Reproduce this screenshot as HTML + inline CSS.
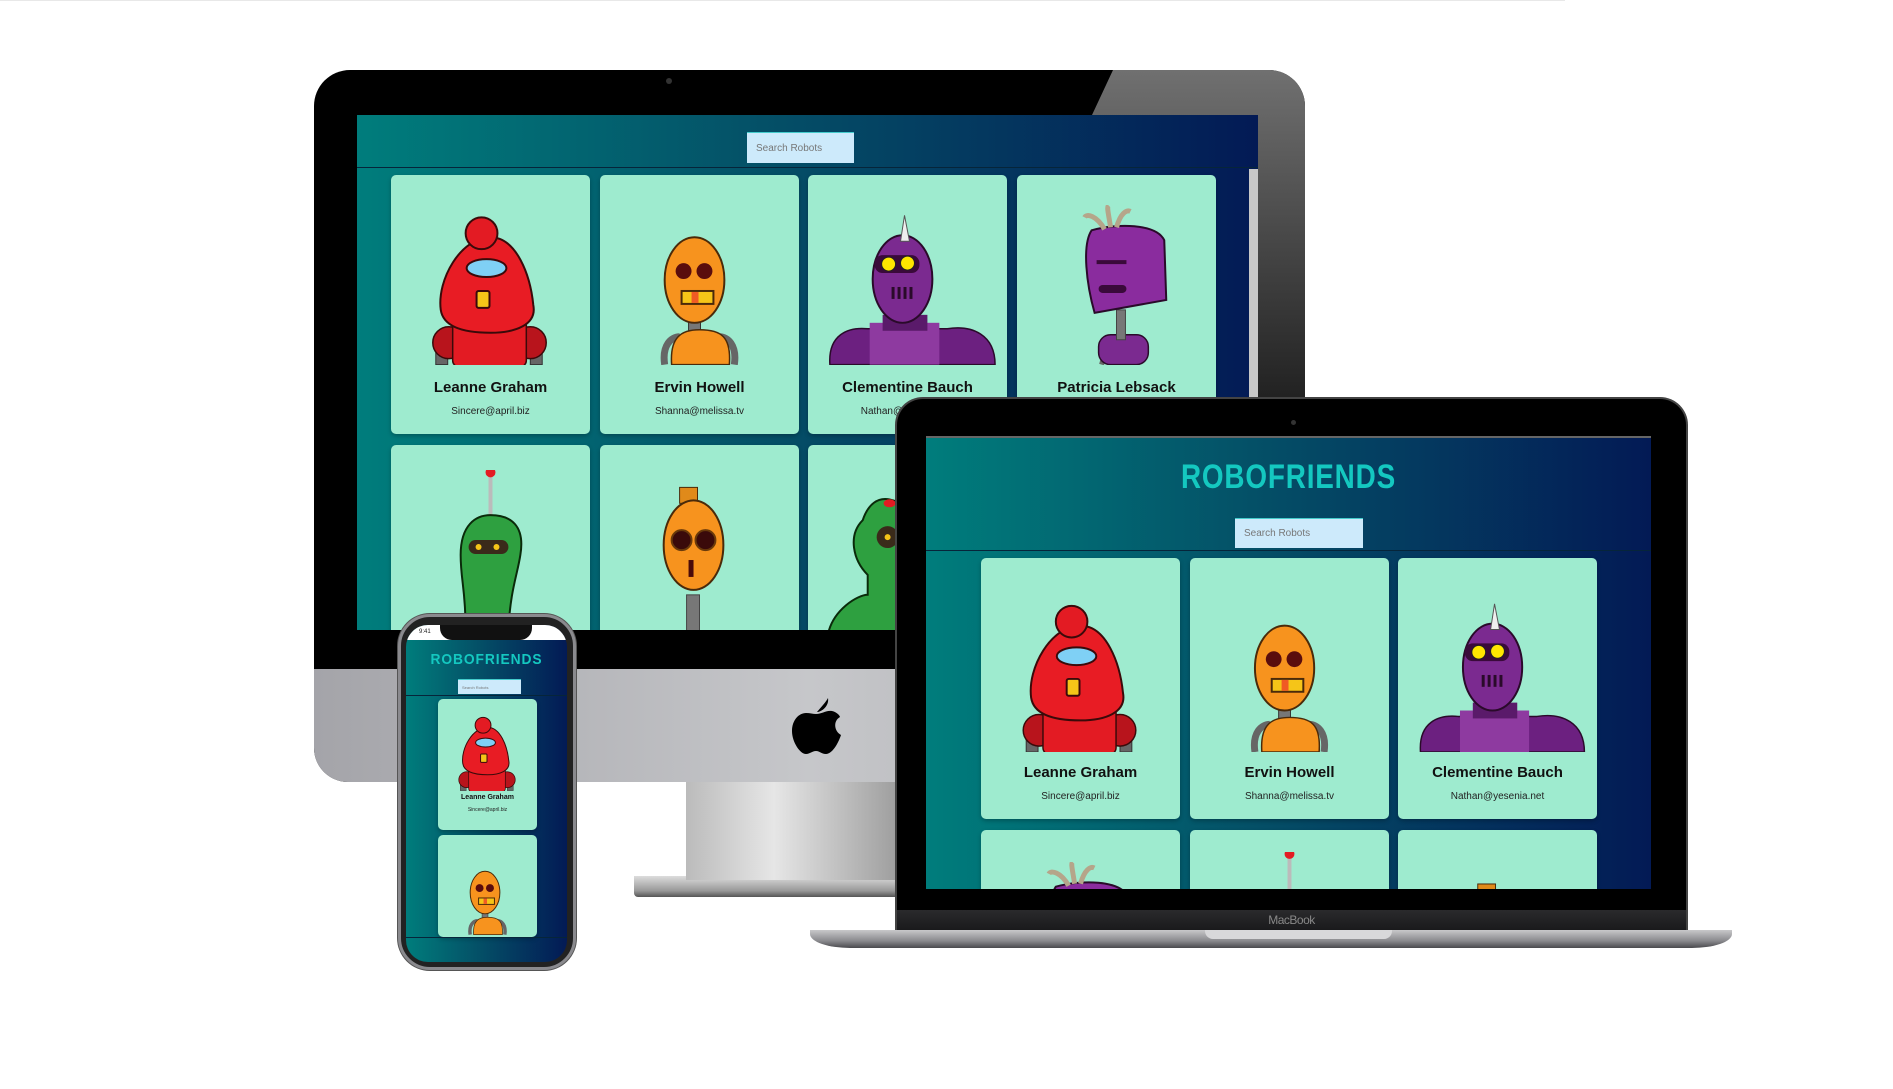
<!DOCTYPE html>
<html><head><meta charset="utf-8"><style>
*{margin:0;padding:0;box-sizing:border-box}
body{width:1893px;height:1089px;background:#fff;position:relative;overflow:hidden;font-family:"Liberation Sans",sans-serif}
.a{position:absolute}
.grad{background:linear-gradient(90deg,#007d7c 0%,#045067 45%,#031a55 100%)}
.card{position:absolute;background:#9eebcf;border-radius:5px;overflow:hidden;box-shadow:0 2px 4px rgba(0,0,0,.25)}
.card svg{position:absolute;left:0}
.nm{position:absolute;left:0;right:0;text-align:center;font-weight:bold;color:#111;font-size:15px}
.em{position:absolute;left:0;right:0;text-align:center;color:#222;font-size:10px}
.title{color:#14c8c0;font-weight:bold;text-align:center;letter-spacing:1px;transform-origin:center}
.search{background:#cdeafb;color:#777;font-size:10px;padding-left:9px;display:flex;align-items:center;border-top:1px solid #4cc}
</style></head><body>
<svg width="0" height="0" style="position:absolute">
<defs>
<symbol id="red" viewBox="0 0 200 160">
<rect x="45" y="135" width="12" height="25" fill="#666" stroke="#333"/><rect x="140" y="135" width="12" height="25" fill="#666" stroke="#333"/>
<circle cx="58" cy="138" r="16" fill="#b8141c" stroke="#3a0a0a" stroke-width="1.5"/><circle cx="140" cy="138" r="16" fill="#b8141c" stroke="#3a0a0a" stroke-width="1.5"/>
<rect x="62" y="112" width="74" height="50" rx="6" fill="#e31b23" stroke="#3a0a0a" stroke-width="1.5"/>
<path d="M100 32 C70 32 46 75 50 105 C53 125 80 128 100 128 C125 128 147 120 143 100 C140 70 126 32 100 32Z" fill="#e81c24" stroke="#3a0a0a" stroke-width="2"/>
<circle cx="91" cy="28" r="16" fill="#e31b23" stroke="#3a0a0a" stroke-width="2"/>
<ellipse cx="96" cy="63" rx="20" ry="9" fill="#7fd0f5" stroke="#3a0a0a" stroke-width="2"/>
<rect x="86" y="86" width="13" height="17" rx="2" fill="#f5c518" stroke="#3a0a0a" stroke-width="2"/>
</symbol>
<symbol id="org" viewBox="0 0 200 160">
<path d="M65 160 C62 140 72 132 80 132" fill="none" stroke="#666" stroke-width="7"/><path d="M135 160 C138 140 128 132 120 132" fill="none" stroke="#666" stroke-width="7"/>
<rect x="89" y="112" width="12" height="20" fill="#777" stroke="#333"/>
<path d="M72 160 C70 132 82 125 100 125 C122 125 132 132 130 160Z" fill="#f7931e" stroke="#4a2a0a" stroke-width="1.5"/>
<ellipse cx="95" cy="75" rx="30" ry="43" fill="#f7931e" stroke="#4a2a0a" stroke-width="2"/>
<circle cx="84" cy="66" r="8" fill="#5a0d0d"/><circle cx="105" cy="66" r="8" fill="#5a0d0d"/>
<rect x="82" y="86" width="32" height="13" fill="#f5c518" stroke="#4a2a0a" stroke-width="2"/>
<rect x="92" y="87" width="7" height="11" fill="#f05a24"/>
</symbol>
<symbol id="pur" viewBox="0 0 200 160">
<path d="M22 160 C20 130 40 122 60 124 L140 124 C165 120 188 130 188 160Z" fill="#6c2080" stroke="#2a0a2a" stroke-width="1.5"/>
<rect x="62" y="118" width="70" height="42" fill="#8e3aa0"/>
<rect x="75" y="110" width="45" height="16" fill="#5a1a6a"/>
<ellipse cx="95" cy="74" rx="30" ry="44" fill="#7b2a90" stroke="#2a0a2a" stroke-width="2"/>
<polygon points="93,36 97,10 102,36" fill="#eee" stroke="#555"/>
<rect x="67" y="50" width="45" height="18" rx="8" fill="#3a0a3a"/>
<circle cx="81" cy="59" r="7" fill="#ffe600" stroke="#222"/><circle cx="100" cy="58" r="7" fill="#ffe600" stroke="#222"/>
<rect x="84" y="82" width="3" height="12" fill="#2a0a2a"/><rect x="90" y="82" width="3" height="12" fill="#2a0a2a"/><rect x="96" y="82" width="3" height="12" fill="#2a0a2a"/><rect x="102" y="82" width="3" height="12" fill="#2a0a2a"/>
</symbol>
<symbol id="pat" viewBox="0 0 200 160">
<path d="M85 160 L92 135 L108 135 L118 160" fill="none" stroke="#666" stroke-width="5"/>
<rect x="82" y="130" width="50" height="30" rx="12" fill="#7b2a90" stroke="#2a0a2a" stroke-width="1.5"/>
<rect x="100" y="105" width="9" height="30" fill="#777" stroke="#444"/>
<path d="M75 25 C100 18 140 18 148 35 L150 95 L78 108 C70 80 65 40 75 25Z" fill="#8a2c9e" stroke="#2a0a2a" stroke-width="2"/>
<path d="M88 24 C80 10 70 8 68 12 M94 22 C92 8 90 2 92 0 M100 22 C104 8 110 4 114 6" stroke="#b5a58a" stroke-width="5" fill="none"/>
<rect x="80" y="55" width="30" height="4" fill="#3a0a3a"/><rect x="82" y="80" width="28" height="8" rx="4" fill="#3a0a3a"/>
</symbol>
<symbol id="grn" viewBox="0 0 200 160">
<line x1="100" y1="0" x2="100" y2="45" stroke="#bbb" stroke-width="4"/><circle cx="100" cy="2" r="5" fill="#e31b23"/>
<path d="M75 160 C75 120 70 110 70 85 C70 55 85 45 100 45 C120 45 135 55 130 85 C127 105 120 120 118 160Z" fill="#2ea040" stroke="#0a2a0a" stroke-width="2"/>
<rect x="78" y="70" width="40" height="14" rx="7" fill="#3a2a1a"/><circle cx="88" cy="77" r="3" fill="#f5c518"/><circle cx="106" cy="77" r="3" fill="#f5c518"/>
</symbol>
<symbol id="org2" viewBox="0 0 200 160">
<rect x="87" y="110" width="13" height="50" fill="#777" stroke="#444"/>
<rect x="80" y="2" width="18" height="16" fill="#e08a1a" stroke="#4a2a0a"/>
<ellipse cx="94" cy="60" rx="30" ry="45" fill="#f7931e" stroke="#4a2a0a" stroke-width="2"/>
<circle cx="82" cy="55" r="10" fill="#3a0a0a" stroke="#6a3a0a" stroke-width="2"/><circle cx="106" cy="55" r="10" fill="#3a0a0a" stroke="#6a3a0a" stroke-width="2"/>
<rect x="89" y="75" width="5" height="17" fill="#4a0a0a"/>
</symbol>
<symbol id="grn2" viewBox="0 0 200 160">
<path d="M20 160 C25 135 50 120 60 120 L60 100 C45 85 40 60 55 45 C60 30 70 20 85 25 C110 30 110 110 110 160Z" fill="#2ea040" stroke="#0a2a0a" stroke-width="2"/>
<circle cx="80" cy="62" r="11" fill="#3a2a1a"/><circle cx="80" cy="62" r="3" fill="#f5c518"/>
<ellipse cx="82" cy="28" rx="6" ry="4" fill="#e31b23"/>
</symbol>
</defs></svg>

<div class="a" style="left:0;top:0;width:1565px;height:1px;background:#e8e8e8"></div>

<!-- iMac -->
<div class="a" style="left:634px;top:876px;width:280px;height:21px;background:linear-gradient(#ddd,#999 70%,#555);border-radius:0 0 4px 4px"></div>
<div class="a" style="left:686px;top:780px;width:220px;height:100px;background:linear-gradient(90deg,#bbb,#e6e6e6 40%,#999)"></div>
<div class="a" style="left:314px;top:70px;width:991px;height:712px;background:#000;border-radius:36px 36px 34px 34px;overflow:hidden">
 <div class="a" style="left:0;top:599px;width:991px;height:113px;background:linear-gradient(90deg,#a4a4a9,#c6c7ca 50%,#a8a8ac)"></div>
 <svg class="a" style="left:0;top:0" width="991" height="600"><defs><linearGradient id="rg" x1="0" y1="0" x2="0" y2="1"><stop offset="0" stop-color="#707070"/><stop offset="0.6" stop-color="#1a1a1a"/><stop offset="1" stop-color="#0a0a0a"/></linearGradient></defs><polygon points="799,0 991,0 991,600 944,600 944,45 778,45" fill="url(#rg)"/></svg>
 <svg class="a" style="left:478px;top:628px" width="50" height="58" viewBox="0 0 50 58"><path d="M25 14 C30 8 34 4 36 0 C37 6 33 12 26 14Z M24 16 C30 16 34 12 40 13 C45 14 48 18 48 19 C41 23 42 33 49 37 C46 46 40 56 34 56 C29 56 28 53 24 53 C20 53 18 56 14 56 C8 56 0 44 0 33 C0 22 7 15 14 15 C18 15 21 16 24 16Z" fill="#000"/></svg>
 <div class="a" style="left:352px;top:8px;width:6px;height:6px;border-radius:3px;background:#333"></div>
</div>
<div class="a grad" style="left:357px;top:115px;width:901px;height:515px;overflow:hidden">
 <div class="a" style="left:0;top:0;width:901px;height:53px;border-bottom:1px solid #06253a"></div>
 <div class="a search" style="left:390px;top:17px;width:107px;height:31px">Search Robots</div>
 <div class="a" style="left:892px;top:54px;width:9px;height:470px;background:#c8c8c8"></div>
 <div class="card" style="left:34px;top:60px;width:199px;height:259px"><svg style="top:30px" width="199" height="160"><use href="#red"/></svg><div class="nm" style="top:204px">Leanne Graham</div><div class="em" style="top:231px">Sincere@april.biz</div></div>
 <div class="card" style="left:243px;top:60px;width:199px;height:259px"><svg style="top:30px" width="199" height="160"><use href="#org"/></svg><div class="nm" style="top:204px">Ervin Howell</div><div class="em" style="top:231px">Shanna@melissa.tv</div></div>
 <div class="card" style="left:451px;top:60px;width:199px;height:259px"><svg style="top:30px" width="199" height="160"><use href="#pur"/></svg><div class="nm" style="top:204px">Clementine Bauch</div><div class="em" style="top:231px">Nathan@yesenia.net</div></div>
 <div class="card" style="left:660px;top:60px;width:199px;height:259px"><svg style="top:30px" width="199" height="160"><use href="#pat"/></svg><div class="nm" style="top:204px">Patricia Lebsack</div><div class="em" style="top:231px">Julianne.OConner@kory.org</div></div>
 <div class="card" style="left:34px;top:330px;width:199px;height:259px"><svg style="top:25px" width="199" height="160"><use href="#grn"/></svg></div>
 <div class="card" style="left:243px;top:330px;width:199px;height:259px"><svg style="top:40px" width="199" height="160"><use href="#org2"/></svg></div>
 <div class="card" style="left:451px;top:330px;width:199px;height:259px"><svg style="top:30px" width="199" height="160"><use href="#grn2"/></svg></div>
</div>

<!-- Laptop -->
<div class="a" style="left:810px;top:930px;width:922px;height:18px;background:linear-gradient(#c8c8ca,#8a8a8e 60%,#4a4a4e);border-radius:0 0 40px 40px / 0 0 14px 14px"></div>
<div class="a" style="left:1205px;top:930px;width:187px;height:9px;background:#d8d8da;border-radius:0 0 8px 8px"></div>
<div class="a" style="left:895px;top:397px;width:793px;height:533px;background:#000;border-radius:28px 28px 0 0;border:2px solid #444;border-bottom:none"></div>
<div class="a" style="left:897px;top:910px;width:789px;height:20px;background:linear-gradient(#2a2a2c,#1a1a1c);color:#888;font-size:12px;text-align:center;line-height:20px;letter-spacing:-0.5px">MacBook</div>
<div class="a" style="left:1291px;top:420px;width:5px;height:5px;border-radius:3px;background:#333"></div>
<div class="a grad" style="left:926px;top:436px;width:725px;height:453px;overflow:hidden;border-top:2px solid #666">
 <div class="a" style="left:0;top:0;width:725px;height:113px;border-bottom:1px solid #06253a"></div>
 <div class="a title" style="left:0;top:20px;width:725px;font-size:34px;transform:scaleX(0.82)">ROBOFRIENDS</div>
 <div class="a search" style="left:309px;top:80px;width:128px;height:30px">Search Robots</div>
 <div class="card" style="left:55px;top:120px;width:199px;height:261px"><svg style="top:36px" width="199" height="158"><use href="#red"/></svg><div class="nm" style="top:206px">Leanne Graham</div><div class="em" style="top:233px">Sincere@april.biz</div></div>
 <div class="card" style="left:264px;top:120px;width:199px;height:261px"><svg style="top:36px" width="199" height="158"><use href="#org"/></svg><div class="nm" style="top:206px">Ervin Howell</div><div class="em" style="top:233px">Shanna@melissa.tv</div></div>
 <div class="card" style="left:472px;top:120px;width:199px;height:261px"><svg style="top:36px" width="199" height="158"><use href="#pur"/></svg><div class="nm" style="top:206px">Clementine Bauch</div><div class="em" style="top:233px">Nathan@yesenia.net</div></div>
 <div class="card" style="left:55px;top:392px;width:199px;height:261px"><svg style="top:32px" width="199" height="158"><use href="#pat"/></svg></div>
 <div class="card" style="left:264px;top:392px;width:199px;height:261px"><svg style="top:22px" width="199" height="158"><use href="#grn"/></svg></div>
 <div class="card" style="left:472px;top:392px;width:199px;height:261px"><svg style="top:52px" width="199" height="158"><use href="#org2"/></svg></div>
</div>

<!-- Phone -->
<div class="a" style="left:398px;top:614px;width:178px;height:356px;border-radius:32px;background:#222;border:3px solid #8a8a8e;box-shadow:0 0 0 1px #555"></div>
<div class="a grad" style="left:406px;top:625px;width:161px;height:337px;border-radius:22px;overflow:hidden">
 <div class="a" style="left:0;top:0;width:161px;height:15px;background:#fff;font-size:6px;color:#222;padding:4px 0 0 13px">9:41</div>
 <div class="a" style="left:34px;top:0;width:92px;height:15px;background:#111;border-radius:0 0 12px 12px"></div>
 <div class="a" style="left:0;top:15px;width:161px;height:56px;border-bottom:1px solid #06253a"></div>
 <div class="a title" style="left:0;top:26px;width:161px;font-size:15px;transform:scaleX(0.92)">ROBOFRIENDS</div>
 <div class="a search" style="left:52px;top:54px;width:63px;height:15px;font-size:4px;padding-left:4px">Search Robots</div>
 <div class="card" style="left:32px;top:74px;width:99px;height:131px"><svg style="top:12px" width="99" height="80"><use href="#red"/></svg><div class="nm" style="top:95px;font-size:7px">Leanne Graham</div><div class="em" style="top:108px;font-size:5px">Sincere@april.biz</div></div>
 <div class="card" style="left:32px;top:210px;width:99px;height:102px"><svg style="top:20px" width="99" height="80"><use href="#org"/></svg></div>
 <div class="a" style="left:0;top:312px;width:161px;height:1px;background:#06253a"></div>
</div>
</body></html>
